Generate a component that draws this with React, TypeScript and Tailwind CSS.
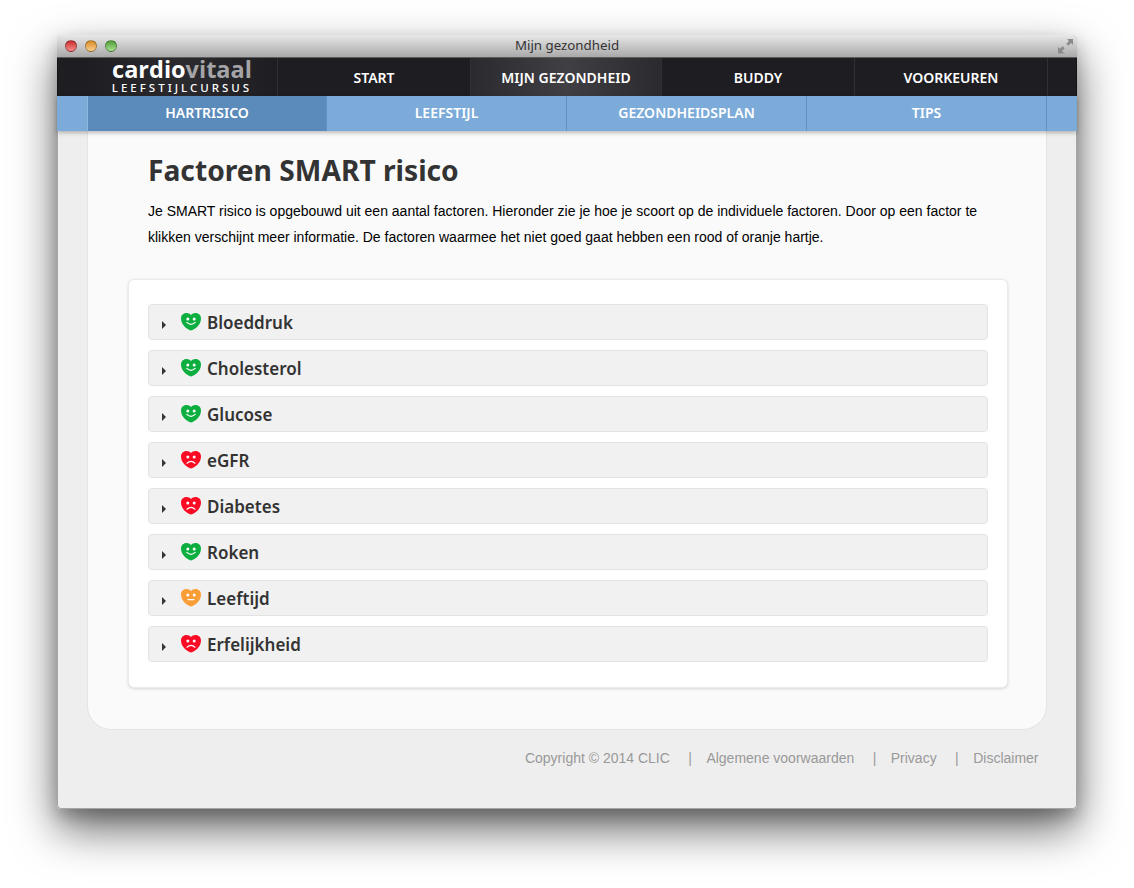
import { Fragment } from 'react';

type Mood = 'good' | 'ok' | 'bad';

const mainNav = [
  { name: 'START', w: 'w-[193px]' },
  { name: 'MIJN GEZONDHEID', w: 'w-[191px]', active: true },
  { name: 'BUDDY', w: 'w-[193px]' },
  { name: 'VOORKEUREN', w: 'w-[193px]' },
];

const subNav = [
  { name: 'HARTRISICO', active: true },
  { name: 'LEEFSTIJL' },
  { name: 'GEZONDHEIDSPLAN' },
  { name: 'TIPS' },
];

const factors: { name: string; mood: Mood }[] = [
  { name: 'Bloeddruk', mood: 'good' },
  { name: 'Cholesterol', mood: 'good' },
  { name: 'Glucose', mood: 'good' },
  { name: 'eGFR', mood: 'bad' },
  { name: 'Diabetes', mood: 'bad' },
  { name: 'Roken', mood: 'good' },
  { name: 'Leeftijd', mood: 'ok' },
  { name: 'Erfelijkheid', mood: 'bad' },
];

const footerLinks = ['Copyright © 2014 CLIC', 'Algemene voorwaarden', 'Privacy', 'Disclaimer'];

function Heart({ mood }: { mood: Mood }) {
  const fill = mood === 'good' ? '#0bae3f' : mood === 'ok' ? '#f99d36' : '#fb0a24';
  const mouth =
    mood === 'good'
      ? 'M5.8 9.4 Q10 13.2 14.2 9.4'
      : mood === 'ok'
        ? 'M7 10.6 H13'
        : 'M6 12.2 Q10 8.6 14 12.2';
  return (
    <svg width="20" height="18" viewBox="0 0 20 18" className="block shrink-0">
      <path
        d="M10 17.6 C6 16.6 0 12 0 5.6 C0 2.2 2.4 0 5.4 0 C7.4 0 9 0.8 10 2 C11 0.8 12.6 0 14.6 0 C17.6 0 20 2.2 20 5.6 C20 12 14 16.6 10 17.6 Z"
        fill={fill}
      />
      <circle cx="6.8" cy="6" r="1.5" fill="#fff" />
      <circle cx="13.2" cy="6" r="1.5" fill="#fff" />
      <path d={mouth} fill="none" stroke="#fff" strokeWidth="1.2" strokeLinecap="round" />
    </svg>
  );
}

function TrafficLight({ color }: { color: string }) {
  return <span className={`h-[12px] w-[12px] rounded-full border border-black/30 bg-gradient-to-b ${color}`} />;
}

export default function App() {
  return (
    <div className="h-[888px] w-[1134px] overflow-hidden bg-white pl-[57px] pt-[35px]">
      <div className="flex h-[774px] w-[1020px] flex-col rounded-[4px] bg-[#eeeeee] shadow-[0_20px_45px_rgba(0,0,0,0.6),0_8px_16px_rgba(0,0,0,0.2)] outline outline-1 -outline-offset-1 outline-black/30">
        {/* Title bar */}
        <div className="relative flex h-[23px] shrink-0 items-center justify-center rounded-t-[4px] border-b border-[#5c5c5c] bg-gradient-to-b from-[#e8e8e8] to-[#a9a9a9]">
          <div className="absolute left-[8px] top-[5px] flex gap-[8px]">
            <TrafficLight color="from-[#c9272c] to-[#f58a8a]" />
            <TrafficLight color="from-[#d98a1f] to-[#f9d08a]" />
            <TrafficLight color="from-[#4f9f38] to-[#a9e08f]" />
          </div>
          <span className="font-['Noto_Sans',sans-serif] text-[13.3px] text-[#333]">Mijn gezondheid</span>
          <svg width="15" height="15" viewBox="0 0 14 14" className="absolute right-[4px] top-[4px]">
            <path d="M14 0 H8.5 L10.2 1.8 L7.8 4.4 L9.6 6.2 L12.2 3.8 L14 5.5 Z" fill="#8a8a8a" />
            <path d="M0 13 V7.5 L1.8 9.2 L4.4 6.8 L6.2 8.6 L3.8 11.2 L5.5 13 Z" fill="#8a8a8a" />
            <path d="M0 14 H6" stroke="#8a8a8a" strokeWidth="0.8" />
          </svg>
        </div>

        {/* Main nav */}
        <nav className="flex h-[38px] shrink-0 bg-[#1e1d22] pl-[30px] font-['Noto_Sans',sans-serif] text-[14px] font-semibold text-white">
          <div className="flex w-[191px] flex-col items-center border-r border-[#303034] bg-gradient-to-r from-[#1e1d22] via-[#2b2a2f] to-[#1e1d22]">
            <div className="h-[23px] font-['Open_Sans',sans-serif] text-[23.5px] font-bold leading-[22px]">
              cardio<span className="text-[#a5a5a7]">vitaal</span>
            </div>
            <div className="text-[11.5px] font-medium leading-[13px] tracking-[3px]">LEEFSTIJLCURSUS</div>
          </div>
          {mainNav.map((item) => (
            <div
              key={item.name}
              className={`flex items-center justify-center border-r border-[#303034] ${item.w} ${
                item.active ? 'bg-gradient-to-r from-[#2b2a2e] via-[#403f43] to-[#2b2a2e]' : ''
              }`}
            >
              {item.name}
            </div>
          ))}
        </nav>

        {/* Sub nav */}
        <nav className="relative z-10 flex h-[35px] shrink-0 bg-[#7cabd9] pl-[30px] font-['Noto_Sans',sans-serif] text-[14px] font-semibold text-white shadow-[0_2px_4px_rgba(0,0,0,0.25)]">
          {subNav.map((item) => (
            <div
              key={item.name}
              className={`flex w-[240px] items-center justify-center border-r border-[#5f93c6] pb-[2px] first:border-l first:border-l-[#8fb8e0] ${
                item.active ? 'bg-[#5a8bbb]' : ''
              }`}
            >
              {item.name}
            </div>
          ))}
        </nav>

        {/* Content panel */}
        <main className="ml-[30px] h-[599px] w-[960px] shrink-0 rounded-b-[24px] border-b border-l border-r border-[#e4e4e4] bg-[#fafafa] px-[40px]">
          <h1 className="ml-[20px] mt-[20px] font-['Noto_Sans',sans-serif] text-[28.2px] font-bold leading-[38px] text-[#333]">
            Factoren SMART risico
          </h1>
          <p className="ml-[20px] mt-[9px] w-[840px] font-['Liberation_Sans',sans-serif] text-[14px] leading-[26px] text-black">
            Je SMART risico is opgebouwd uit een aantal factoren. Hieronder zie je hoe je scoort op de individuele
            factoren. Door op een factor te klikken verschijnt meer informatie. De factoren waarmee het niet goed gaat
            hebben een rood of oranje hartje.
          </p>
          <section className="mt-[29px] flex h-[409px] w-[880px] flex-col gap-[10px] rounded-[6px] border border-[#ebebeb] bg-white px-[19px] pt-[24px] shadow-[0_1px_3px_rgba(0,0,0,0.15)]">
            {factors.map((factor) => (
              <div
                key={factor.name}
                className="flex h-[36px] items-center rounded-[4px] border border-[#e3e3e3] bg-[#f1f1f1] pl-[13px]"
              >
                <span className="mt-[6px] h-0 w-0 border-y-[4px] border-l-[4px] border-y-transparent border-l-[#333]" />
                <span className="ml-[15px] -mt-[1px]">
                  <Heart mood={factor.mood} />
                </span>
                <span className="ml-[6px] mt-[2px] font-['Noto_Sans',sans-serif] text-[17px] font-semibold text-[#333]">
                  {factor.name}
                </span>
              </div>
            ))}
          </section>
        </main>

        {/* Footer */}
        <footer className="flex justify-end pr-[38.5px] pt-[19px] font-['Liberation_Sans',sans-serif] text-[14px] leading-[18px] text-[#999]">
          {footerLinks.map((link, i) => (
            <Fragment key={link}>
              {i > 0 && <span className="w-[36.5px] pl-[4px] text-center">|</span>}
              <span>{link}</span>
            </Fragment>
          ))}
        </footer>
      </div>
    </div>
  );
}
